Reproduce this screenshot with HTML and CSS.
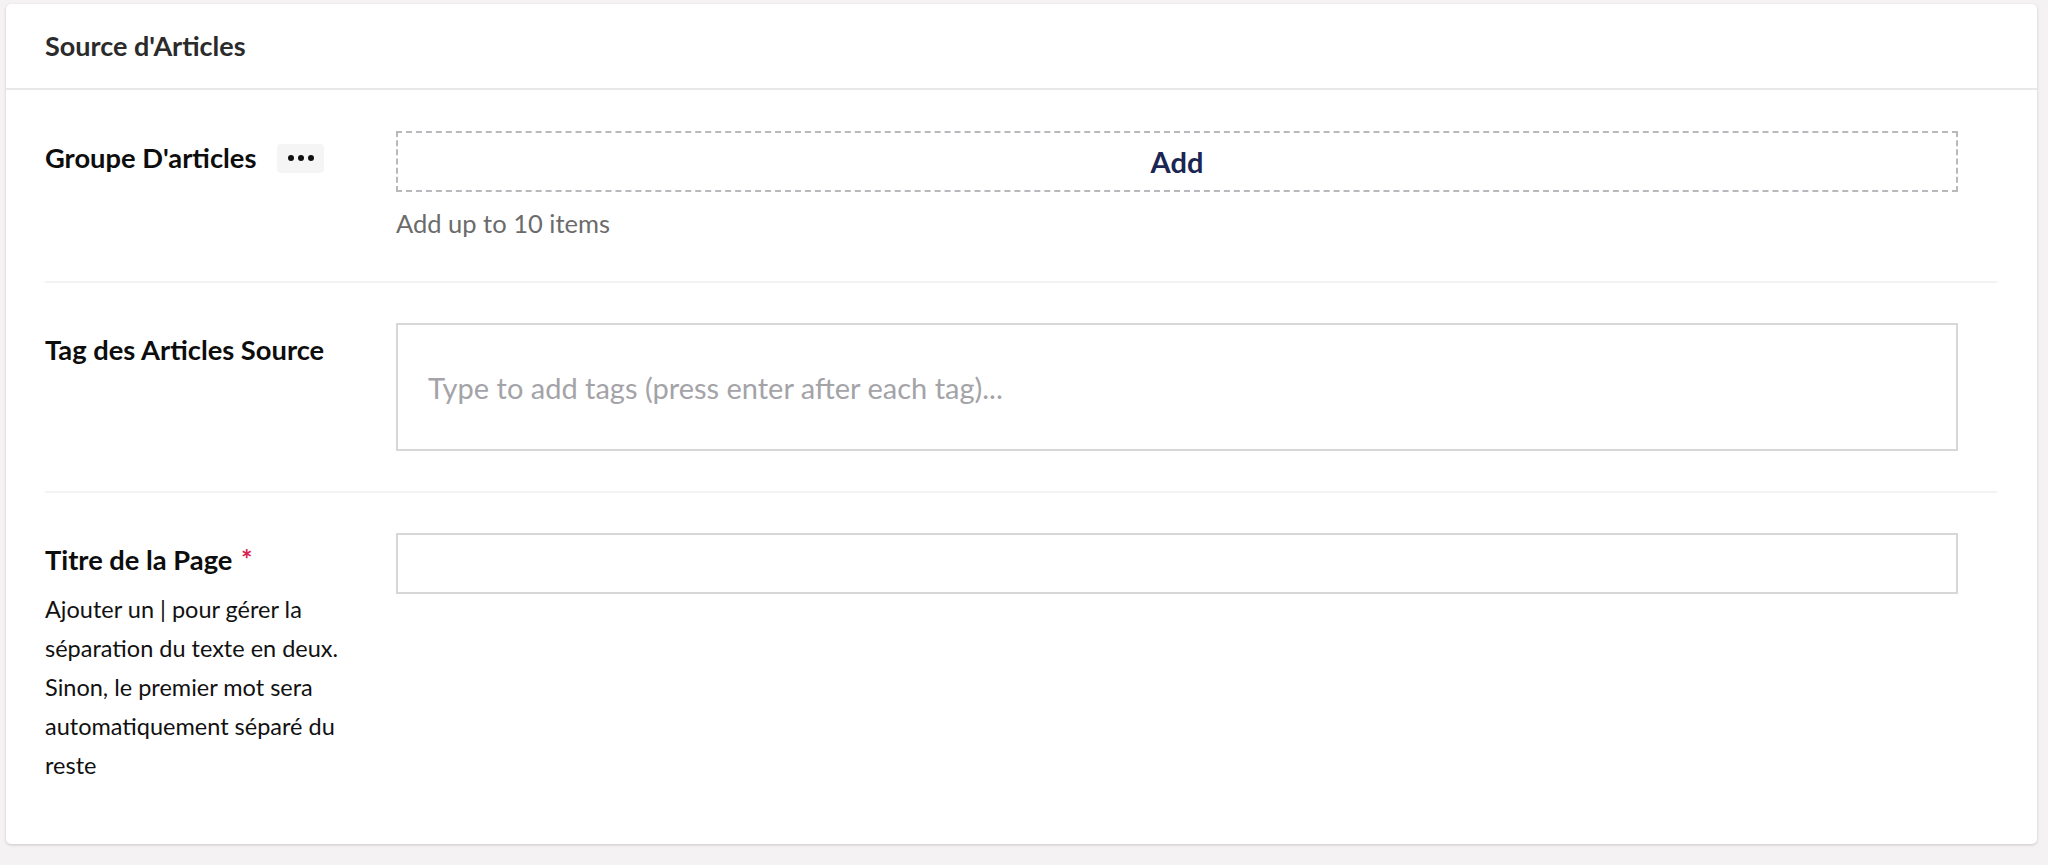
FILE: index.html
```html
<!DOCTYPE html>
<html lang="fr">
<head>
    <meta charset="UTF-8">
    <title>Source d'Articles</title>
    <link rel="stylesheet" href="styles.css">
</head>
<body>
    <div class="card">
        <div class="card-header">
            <h2>Source d'Articles</h2>
        </div>

        <div class="card-body">
            <div class="row first">
                <div class="label-col">
                    <div class="label-line">
                        <span class="label">Groupe D'articles</span>
                        <span class="more-btn"><i></i><i></i><i></i></span>
                    </div>
                </div>
                <div class="field-col">
                    <div class="add-box">Add</div>
                    <div class="field-hint">Add up to 10 items</div>
                </div>
            </div>

            <div class="row">
                <div class="label-col">
                    <span class="label">Tag des Articles Source</span>
                </div>
                <div class="field-col">
                    <div class="tags-input">
                        <span class="placeholder">Type to add tags (press enter after each tag)...</span>
                    </div>
                </div>
            </div>

            <div class="row last">
                <div class="label-col">
                    <span class="label">Titre de la Page <span class="required">*</span></span>
                    <p class="label-help">Ajouter un | pour gérer la séparation du texte en deux. Sinon, le premier mot sera automatiquement séparé du reste</p>
                </div>
                <div class="field-col">
                    <input type="text" class="text-input">
                </div>
            </div>
        </div>
    </div>
</body>
</html>
```

FILE: styles.css
```css
body {
    margin: 0;
    padding: 4px 11px 22px 6px;
    background: #f4f2f3;
    font-family: Lato, "Open Sans", sans-serif;
    color: #111;
}

.card {
    background: #fff;
    border-radius: 5px;
    box-shadow: 0 1px 3px rgba(0, 0, 0, 0.18);
}

.card-header {
    height: 84px;
    padding: 0 39px;
    display: flex;
    align-items: center;
    border-bottom: 2px solid #e8e8e8;
}

.card-header h2 {
    margin: 0;
    font-size: 27px;
    line-height: 30px;
    font-weight: 700;
    color: #2b2b2b;
}

.card-body {
    padding: 0 40px 19px 39px;
}

.row {
    display: grid;
    grid-template-columns: 351px 1562px;
    padding: 40px 0 40px;
    border-bottom: 2px solid #f3f3f3;
}

.row.first {
    padding-top: 41px;
    padding-bottom: 38px;
}

.row.last {
    border-bottom: none;
}

.label-col {
    padding-top: 12px;
}

.label-line {
    display: flex;
    align-items: center;
    gap: 21px;
}

.label {
    font-size: 27.3px;
    line-height: 30px;
    font-weight: 700;
    color: #0d0d0d;
}

.required {
    margin-left: 2px;
    color: #d81e54;
    font-size: 27px;
    line-height: 0;
    vertical-align: 1px;
}

.more-btn {
    display: inline-flex;
    align-items: center;
    justify-content: center;
    gap: 4px;
    width: 47px;
    height: 29px;
    background: #f5f5f6;
    border-radius: 4px;
}

.more-btn i {
    width: 6px;
    height: 6px;
    border-radius: 50%;
    background: #111;
}

.label-help {
    margin: 15px 0 0;
    padding-right: 4px;
    font-size: 23.5px;
    line-height: 39px;
    color: #111;
}

.add-box {
    box-sizing: border-box;
    height: 61px;
    border: 2px dashed #b9b9bd;
    display: flex;
    align-items: center;
    justify-content: center;
    font-size: 29px;
    font-weight: 700;
    color: #1b2653;
}

.field-hint {
    margin: 16px 0 5px;
    font-size: 25.5px;
    line-height: 30px;
    color: #6b6b6b;
}

.tags-input {
    box-sizing: border-box;
    height: 128px;
    border: 2px solid #d7d7d7;
    padding: 0 30px;
    display: flex;
    align-items: center;
}

.placeholder {
    font-size: 29px;
    color: #a3a3a8;
}

.text-input {
    box-sizing: border-box;
    display: block;
    width: 100%;
    height: 61px;
    margin: 0;
    border: 2px solid #d7d7d7;
    border-radius: 0;
    font-family: inherit;
    font-size: 24px;
    padding: 0 30px;
    outline: none;
}
```
